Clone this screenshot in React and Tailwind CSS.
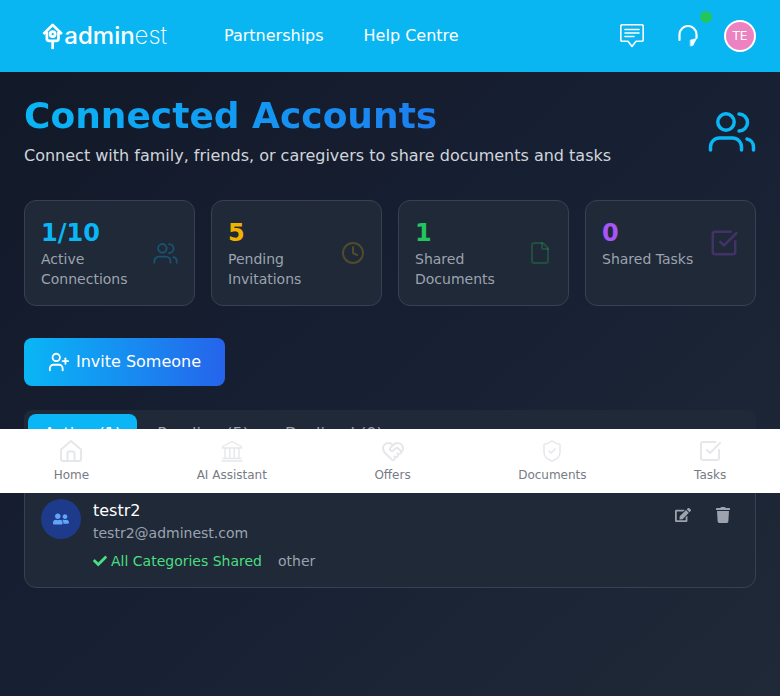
import { Clock, File, SquareCheckBig, UserPlus, ShieldCheck, HeartHandshake } from 'lucide-react';
import { FaCheck, FaEdit, FaTrash, FaUserFriends } from 'react-icons/fa';

function UsersIcon({ width, height, className }) {
  return (
    <svg width={width} height={height} viewBox="0 0 48 40" fill="none" stroke="currentColor" strokeWidth="3.5" strokeLinecap="round" className={className}>
      <circle cx="18" cy="10" r="8.2" />
      <path d="M31 2 a8.5 8.5 0 0 1 0 17" />
      <path d="M2.5 38 v-3 a9 9 0 0 1 9-9 h13 a9 9 0 0 1 9 9 v3" />
      <path d="M39 27 a8 8 0 0 1 6.5 8 v3" />
    </svg>
  );
}

function HomeIcon() {
  return (
    <svg width="24" height="24" viewBox="0 0 24 24" fill="none" stroke="currentColor" strokeWidth="2" strokeLinejoin="round">
      <path d="M12 2 L22 10.5 V20 a2 2 0 0 1-2 2 H4 a2 2 0 0 1-2-2 V10.5 Z" />
      <path d="M8.5 22 V14 a1.5 1.5 0 0 1 1.5-1.5 h4 a1.5 1.5 0 0 1 1.5 1.5 V22" />
    </svg>
  );
}

function BankIcon() {
  return (
    <svg width="24" height="24" viewBox="0 0 24 24" fill="none" stroke="currentColor" strokeWidth="1.4" strokeLinejoin="round">
      <path d="M12 2.5 L21.5 7.5 V9 H2.5 V7.5 Z" />
      <path d="M5 9 V19 M9.7 9 V19 M14.3 9 V19 M19 9 V19" />
      <path d="M2.5 19.5 H21.5 M1.5 22 H22.5" />
    </svg>
  );
}

const stats = [
  { value: '1/10', label: 'Active Connections', color: 'text-[#0ab6f5]', icon: <UsersIcon width={25} height={21} className="shrink-0 text-[#0ab6f5]/30" /> },
  { value: '5', label: 'Pending Invitations', color: 'text-[#f0b100]', icon: <Clock size={24} strokeWidth={2} className="shrink-0 text-[#f0b100]/25" /> },
  { value: '1', label: 'Shared Documents', color: 'text-[#22c55e]', icon: <File size={24} strokeWidth={2} className="shrink-0 text-[#22c55e]/25" /> },
  { value: '0', label: 'Shared Tasks', color: 'text-[#a855f7]', icon: <SquareCheckBig size={30} strokeWidth={2} className="shrink-0 text-[#a855f7]/25" /> },
];

const navItems = [
  { label: 'Home', icon: <HomeIcon /> },
  { label: 'AI Assistant', icon: <BankIcon /> },
  { label: 'Offers', icon: <HeartHandshake size={24} strokeWidth={2} /> },
  { label: 'Documents', icon: <ShieldCheck size={24} strokeWidth={1.5} /> },
  { label: 'Tasks', icon: <SquareCheckBig size={24} strokeWidth={2} /> },
];

function Logo() {
  return (
    <div className="flex w-[125px] items-center">
      <svg width="22" height="30" viewBox="0 0 22 30" fill="none" stroke="white" strokeWidth="2.8">
        <path d="M1.5 13 L11 3.5 L20.5 13" strokeLinejoin="round" />
        <path d="M5 11 V17.5 a2.5 2.5 0 0 0 2.5 2.5 H14.5 a2.5 2.5 0 0 0 2.5-2.5 V11" />
        <circle cx="11" cy="13" r="2.6" />
        <path d="M11 20 V28.5" />
      </svg>
      <span className="ml-[1px] text-[24px] leading-none text-white font-['Inter']">
        <span className="font-medium">admin</span>
        <span className="font-extralight">est</span>
      </span>
    </div>
  );
}

function StatCard({ stat }) {
  return (
    <div className="rounded-xl border border-[#374151] bg-[#1f2937] p-4">
      <div className="flex items-center justify-between">
        <div>
          <div className={`text-2xl font-bold ${stat.color}`}>{stat.value}</div>
          <div className="text-sm text-[#9ca3af]">{stat.label}</div>
        </div>
        {stat.icon}
      </div>
    </div>
  );
}

export default function App() {
  return (
    <div className="relative h-[696px] overflow-hidden bg-gradient-to-br from-[#111827] via-[#172033] to-[#1f2937] font-['DejaVu_Sans',sans-serif]">
      <header className="flex h-[72px] items-center bg-[#09b6f2] pl-[42px] pr-6">
        <Logo />
        <nav className="ml-[57px] flex gap-10 text-base text-white">
          <a>Partnerships</a>
          <a>Help Centre</a>
        </nav>
        <div className="ml-auto flex items-center">
          <svg width="24" height="24" viewBox="0 0 24 24" fill="none" stroke="white" strokeWidth="1.6" strokeLinejoin="round" strokeLinecap="round">
            <path d="M2 0.8 H22 a1.2 1.2 0 0 1 1.2 1.2 V16 a1.2 1.2 0 0 1-1.2 1.2 H16 L12 22.5 L8 17.2 H2 A1.2 1.2 0 0 1 0.8 16 V2 A1.2 1.2 0 0 1 2 0.8 Z" />
            <path d="M5 5.5 H19 M5 9 H19 M5 12.5 H14" />
          </svg>
          <div className="relative ml-[34px]">
            <svg width="20" height="22" viewBox="0 0 20 22" fill="none" stroke="white" strokeWidth="2.2" strokeLinecap="round">
              <path d="M1.5 15 V9.5 a8.5 8.5 0 0 1 17 0 V13" />
              <path d="M12.5 15 L18.5 13.5 L15 20.5 L12.5 21 Z" fill="white" strokeWidth="0.5" />
            </svg>
            <span className="absolute left-[22px] top-[-14px] h-3 w-3 rounded-full bg-[#22c55e]" />
          </div>
          <div className="ml-[26px] flex h-8 w-8 items-center justify-center rounded-full border-2 border-white bg-[#ec82bf] text-xs text-white">
            TE
          </div>
        </div>
      </header>

      <main className="px-6 pt-6">
        <div className="flex items-start justify-between">
          <div>
            <h1 className="mb-1 bg-gradient-to-r from-[#0ab6f5] to-[#2563eb] bg-clip-text pb-1 text-4xl font-bold text-transparent">Connected Accounts</h1>
            <p className="text-base text-[#d1d5db]">Connect with family, friends, or caregivers to share documents and tasks</p>
          </div>
          <UsersIcon width={48} height={40} className="mt-4 text-[#0ab6f5]" />
        </div>

        <div className="mt-8 grid grid-cols-4 gap-4">
          {stats.map((stat) => (
            <StatCard key={stat.label} stat={stat} />
          ))}
        </div>

        <button className="mt-8 flex h-12 w-[201px] items-center justify-center gap-1.5 rounded-lg bg-gradient-to-r from-[#0ab6f5] to-[#2563eb] text-base text-white">
          <UserPlus size={22} />
          Invite Someone
        </button>

        <div className="mt-6 flex gap-1 rounded-lg bg-[#1f2937] p-1 text-base">
          <button className="h-10 rounded-lg bg-[#0ab6f5] px-4 text-white">Active (1)</button>
          <button className="h-10 px-4 text-[#9ca3af]">Pending (5)</button>
          <button className="h-10 px-4 text-[#9ca3af]">Declined (0)</button>
        </div>

        <div className="mt-6 flex items-start rounded-xl border border-[#374151] bg-[#1f2937] p-4">
          <div className="flex h-10 w-10 shrink-0 items-center justify-center rounded-full bg-[#1e3a8a]">
            <FaUserFriends size={16} className="text-[#60a5fa]" />
          </div>
          <div className="ml-3">
            <div className="text-base text-white">testr2</div>
            <div className="text-sm text-[#9ca3af]">testr2@adminest.com</div>
            <div className="mt-2 flex items-center text-sm">
              <FaCheck size={14} className="mr-1 text-[#4ade80]" />
              <span className="text-[#4ade80]">All Categories Shared</span>
              <span className="ml-4 text-[#9ca3af]">other</span>
            </div>
          </div>
          <div className="ml-auto flex gap-6 pr-2 pt-2 text-[#9ca3af]">
            <FaEdit size={16} />
            <FaTrash size={16} />
          </div>
        </div>
      </main>

      <nav className="absolute inset-x-0 top-[429px] flex h-16 items-center justify-around bg-white">
        {navItems.map((item) => (
          <div key={item.label} className="flex flex-col items-center">
            <span className="text-[#e5e7eb]">{item.icon}</span>
            <span className="mt-1 text-xs text-[#777b85]">{item.label}</span>
          </div>
        ))}
      </nav>
    </div>
  );
}
